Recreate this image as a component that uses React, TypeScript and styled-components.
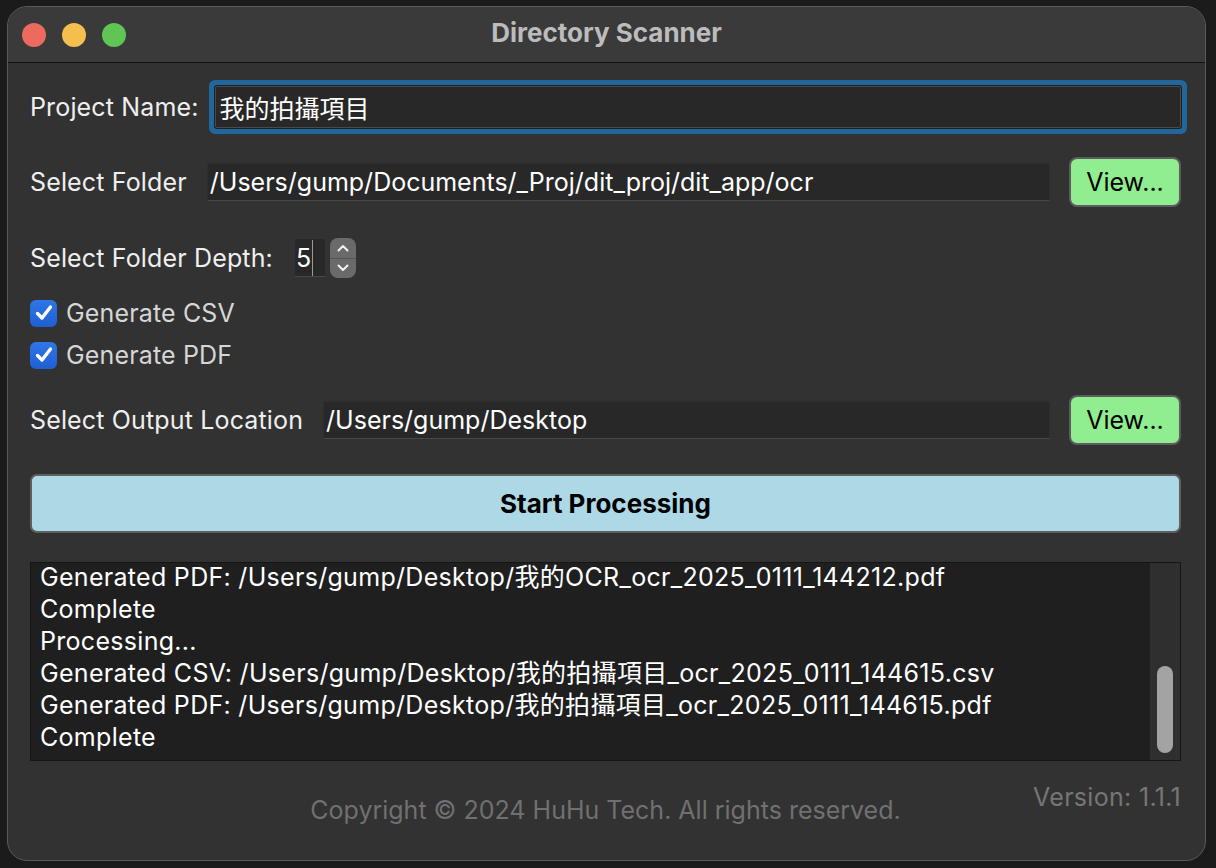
import React from "react";
import styled, { createGlobalStyle } from "styled-components";

const GlobalStyle = createGlobalStyle`
  html, body {
    margin: 0;
    padding: 0;
    background: #1b1b1b;
    font-family: Inter, "Noto Sans", "Noto Sans CJK TC", sans-serif;
  }
`;

const Screen = styled.div`
  width: 1216px;
  height: 868px;
  padding: 6px 10px 7px 7px;
  box-sizing: border-box;
`;

const Window = styled.div`
  height: 100%;
  display: flex;
  flex-direction: column;
  background: #323232;
  border: 1px solid #5a5a5a;
  border-radius: 20px;
  overflow: hidden;
  box-sizing: border-box;
`;

const TitleBar = styled.div`
  height: 55px;
  flex: none;
  display: flex;
  align-items: center;
  position: relative;
  background: #3a3a3a;
  border-bottom: 1px solid #111;
`;

const Lights = styled.div`
  display: flex;
  gap: 16px;
  padding-left: 14px;
`;

const Light = styled.span<{ $color: string }>`
  width: 24px;
  height: 24px;
  border-radius: 50%;
  background: ${(p) => p.$color};
`;

const Title = styled.div`
  position: absolute;
  left: 0;
  right: 0;
  top: 12px;
  text-align: center;
  font-size: 26px;
  line-height: 28px;
  font-weight: 700;
  color: #bcbcbc;
  pointer-events: none;
`;

const Body = styled.div`
  flex: 1;
  display: flex;
  flex-direction: column;
  padding: 0 24px 0 22px;
  color: #ececec;
  font-size: 25px;
`;

const Row = styled.div<{ $h: number; $top: number; $gap?: number }>`
  display: flex;
  align-items: center;
  height: ${(p) => p.$h}px;
  margin-top: ${(p) => p.$top}px;
  gap: ${(p) => p.$gap ?? 20}px;
`;

const Label = styled.span`
  white-space: nowrap;
  color: #efefef;
  letter-spacing: 0.15px;
`;

const Entry = styled.div<{ $focus?: boolean }>`
  flex: 1;
  height: 38px;
  display: flex;
  align-items: center;
  padding-left: 2px;
  box-sizing: border-box;
  background: #282828;
  border: 1px solid #2e2e2e;
  border-bottom-color: #484848;
  color: #ffffff;
  white-space: nowrap;
  overflow: hidden;
  font-family: Inter, "Noto Sans CJK TC", sans-serif;
  font-feature-settings: "tnum";
  ${(p) =>
    p.$focus &&
    `
    height: 42px;
    margin: 0 0 0 -2px;
    border: 1px solid #4a4a4a;
    padding-left: 4px;
    box-shadow: 0 0 0 1px #202020, 0 0 0 6px #22679b;
    border-radius: 2px;
  `}
`;

const ViewButton = styled.button`
  width: 112px;
  height: 50px;
  margin-left: -1px;
  background: #90ee90;
  border: 2px solid #5c5c5c;
  border-radius: 8px;
  color: #000;
  font-family: inherit;
  font-size: 25px;
  padding: 0;
`;

const SpinBox = styled.div`
  display: flex;
  align-items: center;
  gap: 5px;
`;

const SpinEntry = styled.div`
  width: 30px;
  height: 38px;
  box-sizing: border-box;
  background: #282828;
  border-bottom: 1px solid #484848;
  color: #fff;
  display: flex;
  align-items: center;
  padding-left: 1px;
`;

const Caret = styled.span`
  width: 1px;
  height: 36px;
  background: #9a9a9a;
  margin-left: 1px;
`;

const SpinArrows = styled.div`
  width: 26px;
  height: 40px;
  border-radius: 8px;
  background: #6a6a6a;
  display: flex;
  flex-direction: column;
  overflow: hidden;
`;

const SpinHalf = styled.div<{ $top?: boolean }>`
  flex: 1;
  display: flex;
  align-items: center;
  justify-content: center;
  border-bottom: ${(p) => (p.$top ? "1px solid #555" : "none")};
`;

const CheckList = styled.div`
  display: flex;
  flex-direction: column;
  margin-top: 14px;
`;

const CheckRow = styled.label`
  display: flex;
  align-items: center;
  gap: 9px;
  height: 42px;
  color: #d6d6d6;
  letter-spacing: 0.15px;
`;

const CheckBox = styled.span`
  width: 27px;
  height: 27px;
  border-radius: 6px;
  background: linear-gradient(#2f76e8, #1f5fd2);
  display: flex;
  align-items: center;
  justify-content: center;
`;

const StartButton = styled.button`
  height: 59px;
  margin-top: 29px;
  background: #add8e6;
  border: 2px solid #5f5f5f;
  border-radius: 7px;
  color: #000;
  font-family: inherit;
  font-size: 26px;
  font-weight: 700;
  padding: 0;
`;

const Log = styled.div`
  height: 199px;
  margin-top: 29px;
  box-sizing: border-box;
  display: flex;
  background: #1f1f1f;
  border: 1px solid #151515;
  overflow: hidden;
`;

const LogText = styled.div`
  flex: 1;
  padding: 0 0 0 9px;
  margin-top: -2px;
  line-height: 32px;
  color: #fff;
  white-space: nowrap;
  font-family: Inter, "Noto Sans CJK TC", sans-serif;
  letter-spacing: 0.3px;
`;

const Track = styled.div`
  width: 30px;
  background: #2f2f2f;
  display: flex;
  justify-content: center;
  align-items: flex-end;
  padding-bottom: 7px;
  box-sizing: border-box;
`;

const Thumb = styled.div`
  width: 16px;
  height: 87px;
  border-radius: 8px;
  background: #a3a3a3;
`;

const Footer = styled.div`
  flex: 1;
  display: grid;
  grid-template-columns: 1fr auto 1fr;
  color: #707070;
`;

const Copyright = styled.span`
  grid-column: 2;
  margin-top: 35px;
  line-height: 28px;
`;

const Version = styled.span`
  grid-column: 3;
  justify-self: end;
  margin-top: 22px;
  line-height: 28px;
  color: #767676;
  letter-spacing: 0.3px;
`;

const Check = () => (
  <svg width="20" height="20" viewBox="0 0 20 20">
    <path d="M3.5 10.5 L8 15 L16.5 4" fill="none" stroke="#fff" strokeWidth="3.4" strokeLinecap="round" strokeLinejoin="round" />
  </svg>
);

const Chevron = ({ up }: { up?: boolean }) => (
  <svg width="14" height="10" viewBox="0 0 14 10">
    <path d={up ? "M2.5 7.5 L7 3 L11.5 7.5" : "M2.5 2.5 L7 7 L11.5 2.5"} fill="none" stroke="#f0f0f0" strokeWidth="2" strokeLinecap="round" strokeLinejoin="round" />
  </svg>
);

const logLines = [
  "Generated PDF: /Users/gump/Desktop/我的OCR_ocr_2025_0111_144212.pdf",
  "Complete",
  "Processing...",
  "Generated CSV: /Users/gump/Desktop/我的拍攝項目_ocr_2025_0111_144615.csv",
  "Generated PDF: /Users/gump/Desktop/我的拍攝項目_ocr_2025_0111_144615.pdf",
  "Complete",
];

export default function App() {
  return (
    <Screen>
      <GlobalStyle />
      <Window>
        <TitleBar>
          <Lights>
            <Light $color="#ec6a5e" />
            <Light $color="#f4bf4f" />
            <Light $color="#61c554" />
          </Lights>
          <Title>Directory Scanner</Title>
        </TitleBar>
        <Body>
          <Row $h={52} $top={18} $gap={18}>
            <Label>Project Name:</Label>
            <Entry $focus>我的拍攝項目</Entry>
          </Row>
          <Row $h={50} $top={24}>
            <Label>Select Folder</Label>
            <Entry>/Users/gump/Documents/_Proj/dit_proj/dit_app/ocr</Entry>
            <ViewButton>View...</ViewButton>
          </Row>
          <Row $h={40} $top={31} $gap={22}>
            <Label>Select Folder Depth:</Label>
            <SpinBox>
              <SpinEntry>
                5<Caret />
              </SpinEntry>
              <SpinArrows>
                <SpinHalf $top>
                  <Chevron up />
                </SpinHalf>
                <SpinHalf>
                  <Chevron />
                </SpinHalf>
              </SpinArrows>
            </SpinBox>
          </Row>
          <CheckList>
            <CheckRow>
              <CheckBox>
                <Check />
              </CheckBox>
              Generate CSV
            </CheckRow>
            <CheckRow>
              <CheckBox>
                <Check />
              </CheckBox>
              Generate PDF
            </CheckRow>
          </CheckList>
          <Row $h={50} $top={19}>
            <Label>Select Output Location</Label>
            <Entry>/Users/gump/Desktop</Entry>
            <ViewButton>View...</ViewButton>
          </Row>
          <StartButton>Start Processing</StartButton>
          <Log>
            <LogText>
              {logLines.map((l, i) => (
                <div key={i}>{l}</div>
              ))}
            </LogText>
            <Track>
              <Thumb />
            </Track>
          </Log>
          <Footer>
            <Copyright>Copyright © 2024 HuHu Tech. All rights reserved.</Copyright>
            <Version>Version: 1.1.1</Version>
          </Footer>
        </Body>
      </Window>
    </Screen>
  );
}
